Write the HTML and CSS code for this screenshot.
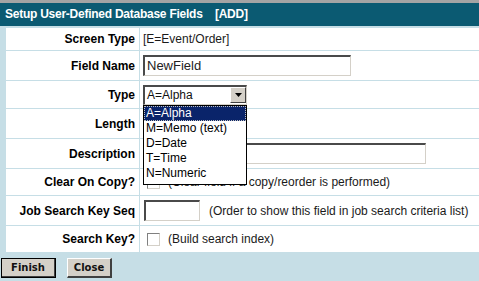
FILE: index.html
```html
<!DOCTYPE html>
<html>
<head>
<meta charset="utf-8">
<link rel="stylesheet" href="styles.css">
</head>
<body>
<div class="topbar"></div>
<div class="header">Setup User-Defined Database Fields&nbsp;&nbsp;&nbsp;&nbsp;[ADD]</div>
<div class="page">
  <div class="form">
    <div class="lbl r1">Screen Type</div>
    <div class="val r1"><span class="txt">[E=Event/Order]</span></div>

    <div class="lbl r2">Field Name</div>
    <div class="val r2"><div class="input fname">NewField</div></div>

    <div class="lbl r3">Type</div>
    <div class="val r3">
      <div class="select">
        <span class="seltext">A=Alpha</span>
        <span class="selbtn"><svg width="7" height="4" viewBox="0 0 7 4"><path d="M0 0H7L3.5 4Z" fill="#000"/></svg></span>
        <div class="list">
          <div class="opt sel">A=Alpha</div>
          <div class="opt">M=Memo (text)</div>
          <div class="opt">D=Date</div>
          <div class="opt">T=Time</div>
          <div class="opt">N=Numeric</div>
        </div>
      </div>
    </div>

    <div class="lbl r4">Length</div>
    <div class="val r4"><div class="input len"></div></div>

    <div class="lbl r5">Description</div>
    <div class="val r5"><div class="input desc"></div></div>

    <div class="lbl r6">Clear On Copy?</div>
    <div class="val r6"><span class="check"></span><span class="txt note">(Clear field if a copy/reorder is performed)</span></div>

    <div class="lbl r7">Job Search Key Seq</div>
    <div class="val r7"><div class="input seq"></div><span class="txt note2">(Order to show this field in job search criteria list)</span></div>

    <div class="lbl r8">Search Key?</div>
    <div class="val r8"><span class="check"></span><span class="txt note">(Build search index)</span></div>
  </div>
  <div class="buttons">
    <span class="btn finish">Finish</span>
    <span class="btn close">Close</span>
  </div>
</div>
</body>
</html>
```

FILE: styles.css
```css
html, body {
  margin: 0;
  padding: 0;
  width: 479px;
  height: 281px;
  overflow: hidden;
  background: #c6dee6;
  font-family: "Liberation Sans", Arial, sans-serif;
}
.topbar {
  height: 3px;
  background: #a4a4a4;
}
.header {
  height: 23px;
  background: #0b5a72;
  color: #fff;
  font-weight: bold;
  font-size: 12px;
  letter-spacing: -0.25px;
  line-height: 23px;
  padding-left: 5px;
  white-space: nowrap;
}
.page {
  padding: 2px 0 0 6px;
}
.form {
  display: grid;
  grid-template-columns: 133px 1fr;
  gap: 1px;
  background: #c6dee6;
  grid-template-rows: 22px 29px 27px 29px 29px 26px 29px 26px;
}
.lbl, .val {
  background: #fff;
  display: flex;
  align-items: center;
  font-size: 12px;
  white-space: nowrap;
}
.lbl {
  justify-content: flex-end;
  padding-right: 4px;
  font-weight: bold;
  color: #000;
}
.val {
  padding-left: 3px;
  color: #1a1a1a;
  position: relative;
}
.txt { color: #1a1a1a; }
.input {
  box-sizing: border-box;
  height: 21px;
  background: #fff;
  border-top: 2px solid #4a4a4a;
  border-left: 2px solid #4a4a4a;
  border-right: 1px solid #d4d0c8;
  border-bottom: 1px solid #d4d0c8;
  font-size: 13px;
  line-height: 17px;
  padding-left: 2px;
  color: #222;
}
.fname { width: 208px; }
.len { width: 60px; }
.desc { width: 283px; }
.seq { width: 56px; margin-left: 1px; }
.note2 { margin-left: 9px; }
.select {
  position: relative;
  box-sizing: border-box;
  width: 104px;
  height: 20px;
  border-top: 2px solid #4a4a4a;
  border-left: 2px solid #4a4a4a;
  border-right: 1px solid #d4d0c8;
  border-bottom: 1px solid #d4d0c8;
  display: flex;
  align-items: center;
  background: #fff;
  z-index: 5;
}
.seltext {
  flex: 1;
  font-size: 12px;
  padding-left: 2px;
  color: #111;
}
.selbtn {
  width: 16px;
  height: 16px;
  box-sizing: border-box;
  background: #d4d0c8;
  border-top: 1px solid #fff;
  border-left: 1px solid #fff;
  border-right: 1px solid #404040;
  border-bottom: 1px solid #404040;
  display: flex;
  align-items: center;
  justify-content: center;
}
.list {
  position: absolute;
  top: 18px;
  left: -2px;
  width: 104px;
  box-sizing: border-box;
  border: 1px solid #000;
  background: #fff;
  padding-bottom: 3px;
}
.opt {
  height: 15px;
  line-height: 15px;
  font-size: 12px;
  padding-left: 2px;
  color: #000;
}
.opt.sel {
  background: #0a246a;
  color: #fff;
  outline: 1px dotted #c0c0c0;
  outline-offset: -1px;
}
.check {
  display: inline-block;
  box-sizing: border-box;
  width: 13px;
  height: 13px;
  margin-left: 4px;
  border-top: 1px solid #808080;
  border-left: 1px solid #808080;
  border-right: 1px solid #d4d0c8;
  border-bottom: 1px solid #d4d0c8;
  background: #fff;
}
.note { margin-left: 8px; }
.buttons {
  display: flex;
  gap: 11px;
  padding: 6px 0 0 0;
  margin-left: -5px;
}
.btn {
  box-sizing: border-box;
  height: 20px;
  display: inline-flex;
  align-items: center;
  justify-content: center;
  background: #d4d0c8;
  border-top: 1px solid #fff;
  border-left: 1px solid #fff;
  border-right: 2px solid #404040;
  border-bottom: 2px solid #404040;
  font-family: "DejaVu Sans", Verdana, sans-serif;
  font-weight: bold;
  font-size: 10px;
  color: #111;
}
.finish {
  width: 55px;
  outline: 1px solid #000;
  outline-offset: -1px;
}
.close { width: 45px; }
```
